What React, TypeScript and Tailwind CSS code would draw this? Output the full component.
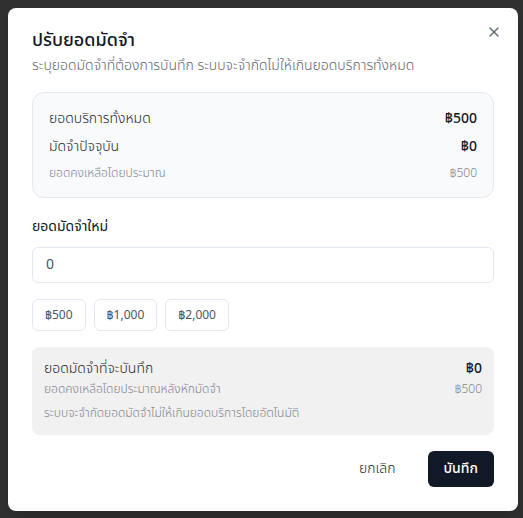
import { X } from "lucide-react";

const presets = ["฿500", "฿1,000", "฿2,000"];

export default function App() {
  return (
    <div className="h-[518px] bg-[#303030] p-2 font-['Noto_Sans_Thai','Noto_Sans_Thai_UI','Noto_Sans',sans-serif]">
      <div className="relative w-[510px] rounded-lg bg-white p-6 shadow-lg">
        <button className="absolute right-4 top-4 text-[#334155] opacity-80">
          <X size={16} />
        </button>

        <div className="flex flex-col gap-1.5">
          <h2 className="text-lg leading-none font-medium text-[#111827]">ปรับยอดมัดจำ</h2>
          <p className="text-sm font-light text-[#5f6673]">
            ระบุยอดมัดจำที่ต้องการบันทึก ระบบจะจำกัดไม่ให้เกินยอดบริการทั้งหมด
          </p>
        </div>

        <div className="mt-4 flex flex-col gap-2 rounded-xl border border-[#e2e8f0] bg-[#f8fafc] p-4">
          <div className="flex items-center justify-between text-sm font-light text-[#27272a]">
            <span>ยอดบริการทั้งหมด</span>
            <span className="font-medium text-[#111827]">฿500</span>
          </div>
          <div className="flex items-center justify-between text-sm font-light text-[#27272a]">
            <span>มัดจำปัจจุบัน</span>
            <span className="font-medium text-[#111827]">฿0</span>
          </div>
          <div className="flex items-center justify-between text-xs font-light text-[#7d8490]">
            <span>ยอดคงเหลือโดยประมาณ</span>
            <span>฿500</span>
          </div>
        </div>

        <label className="mt-[19px] block text-sm leading-5 text-[#111827]">ยอดมัดจำใหม่</label>
        <div className="mt-2.5 flex h-9 items-center rounded-md border border-[#e2e8f0] px-[13px] text-sm text-[#4b5563]">
          0
        </div>

        <div className="mt-4 flex gap-2">
          {presets.map((p) => (
            <button
              key={p}
              className="h-8 rounded-md border border-[#e2e8f0] bg-white px-3 text-xs text-[#4b5563]"
            >
              {p}
            </button>
          ))}
        </div>

        <div className="mt-4 rounded-lg bg-[#f1f1f1] px-3 pt-3 pb-3.5">
          <div className="flex items-center justify-between text-sm font-light text-[#27272a]">
            <span>ยอดมัดจำที่จะบันทึก</span>
            <span className="font-medium text-[#111827]">฿0</span>
          </div>
          <div className="mt-0.5 flex items-center justify-between text-xs font-light text-[#7d8490]">
            <span>ยอดคงเหลือโดยประมาณหลังหักมัดจำ</span>
            <span>฿500</span>
          </div>
          <p className="mt-2 text-xs font-light text-[#7d8490]">ระบบจะจำกัดยอดมัดจำไม่ให้เกินยอดบริการโดยอัตโนมัติ</p>
        </div>

        <div className="mt-4 flex justify-end gap-4">
          <button className="h-9 px-4 text-sm font-light text-[#27272a]">ยกเลิก</button>
          <button className="h-9 rounded-md bg-[#111827] px-4 text-sm font-medium text-white">บันทึก</button>
        </div>
      </div>
    </div>
  );
}
